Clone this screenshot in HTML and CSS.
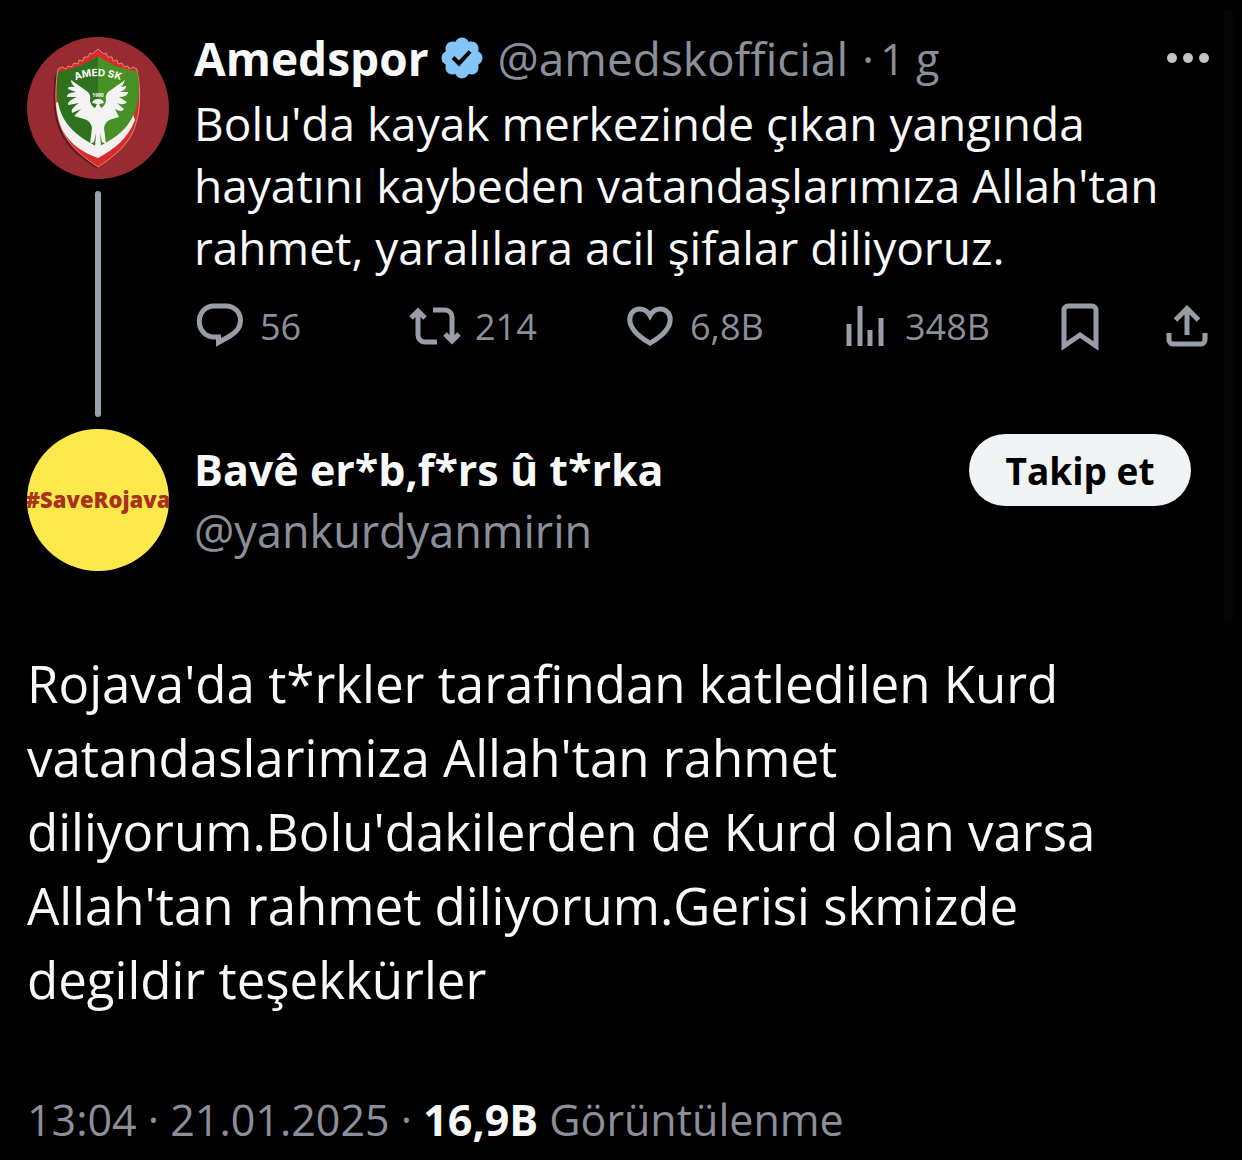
FILE: index.html
```html
<!DOCTYPE html>
<html lang="tr">
<head>
  <meta charset="UTF-8">
  <meta name="viewport" content="width=device-width, initial-scale=1.0">
  <title>Gönderi</title>
  <link rel="stylesheet" href="styles.css">
</head>
<body>
  <main class="thread">

    <!-- Parent post -->
    <article class="post">
      <div class="side">
        <svg class="avatar" viewBox="0 0 142 142" role="img" aria-label="Amedspor">
          <defs>
            <clipPath id="leftHalf"><rect x="0" y="0" width="71" height="142"/></clipPath>
            <path id="crestArc" d="M42 46 Q71 32 100 46"/>
          </defs>
          <circle cx="71" cy="71" r="71" fill="#982b31"/>
          <path d="M28 36 C25 66 27 84 35 99 C43 114 57 123 70 132 L72 120 L40 80 Z" fill="#4a1015" opacity=".7"/>
          <path d="M71 12 L77 17 L79 16 L81 20 L85 20 L86 24 L90 23 L91 27 L95 26 L97 30 L101 29 L102 32 L106 30 L110 32 C115 58 113 80 105 97 C97 112 84 121 71 130 C58 121 45 112 37 97 C28 80 27 58 31 32 L35 30 L39 32 L41 29 L45 30 L47 26 L51 27 L52 23 L56 24 L57 20 L61 20 L63 16 L65 17 Z" fill="#da2a2b" stroke="#e5b58f" stroke-width=".7"/>
          <path d="M29 66 C30 78 32 86 36 94 C44 108 57 116 71 121 C88 112 101 101 108 83 L100 60 H40 Z" fill="#f2f0f0"/>
          <path d="M71 19 C83 27 97 33 110 34 C115 58 110 77 99 90 C91 99 81 105 71 110 C61 105 51 99 43 90 C31 77 28 58 31 35 C45 33 59 27 71 19 Z" fill="#479126"/>
          <path d="M71 19 C83 27 97 33 110 34 C115 58 110 77 99 90 C91 99 81 105 71 110 C61 105 51 99 43 90 C31 77 28 58 31 35 C45 33 59 27 71 19 Z" fill="#2f721e" clip-path="url(#leftHalf)"/>
          <path d="M44 43 L61 55 Q64 58 63 64 Q64 69 68 71 L70 67 L65 66 Q66 62 71 62 Q76 62 77 66 L72 67 L74 71 Q78 69 79 64 Q78 58 81 55 L98 43 Q97 47 94 50 L99 49 Q100 52 93 55 L101 55 Q101 60 92 60 L100 65 Q97 69 90 66 L97 72 Q95 76 88 72 L92 80 L85 82 Q78 84 77 91 L79 107 L75 105 L73 96 L74 110 H68 L69 96 L67 105 L63 107 L65 91 Q64 84 57 82 L47 79 L54 72 L45 76 Q43 72 52 66 L41 68 Q40 64 50 60 L40 60 Q39 56 49 55 L41 52 Q40 49 48 50 Q44 47 44 43 Z" fill="#f3f3f3"/>
          <text class="crest-name"><textPath href="#crestArc" startOffset="50%">AMED SK</textPath></text>
          <text class="crest-year" x="71" y="60">1990</text>
        </svg>
        <div class="connector"></div>
      </div>

      <div class="content">
        <header class="post-head">
          <strong class="name">Amedspor</strong>
          <svg class="verified" viewBox="0 0 24 24" aria-label="Onaylanmış"><path d="M22.25 12c0-1.43-.88-2.67-2.19-3.34.46-1.39.2-2.9-.81-3.91s-2.52-1.27-3.91-.81c-.66-1.31-1.91-2.19-3.34-2.19s-2.67.88-3.33 2.19c-1.4-.46-2.91-.2-3.92.81s-1.26 2.52-.8 3.91c-1.31.67-2.2 1.91-2.2 3.34s.89 2.67 2.2 3.34c-.46 1.39-.21 2.9.8 3.91s2.52 1.26 3.91.81c.67 1.31 1.91 2.19 3.34 2.19s2.68-.88 3.34-2.19c1.39.45 2.9.2 3.91-.81s1.27-2.52.81-3.91c1.31-.67 2.19-1.91 2.19-3.34zm-11.71 4.2L6.8 12.46l1.41-1.42 2.26 2.26 4.8-5.23 1.47 1.36-6.2 6.77z"/></svg>
          <span class="handle">@amedskofficial</span>
          <span class="dot">·</span>
          <span class="age">1 g</span>
          <button class="more" type="button" aria-label="Daha fazla">
            <svg viewBox="0 0 42 12"><circle cx="5" cy="6" r="5"/><circle cx="21" cy="6" r="5"/><circle cx="37" cy="6" r="5"/></svg>
          </button>
        </header>

        <p class="text">Bolu'da kayak merkezinde çıkan yangında hayatını kaybeden vatandaşlarımıza Allah'tan rahmet, yaralılara acil şifalar diliyoruz.</p>

        <div class="actions">
          <button class="action" type="button" aria-label="Yanıtla">
            <svg viewBox="0 0 52 52"><path d="M20 6 H32 C40 6 46.5 12 46.5 20.5 C46.5 28 42 32.5 36 36 L24.5 42.5 V37 H19.5 C11.5 37 5.3 30 5.3 21.5 C5.3 12.5 11.5 6 20 6 Z"/></svg>
            <span>56</span>
          </button>
          <button class="action" type="button" aria-label="Yeniden gönder">
            <svg viewBox="0 0 52 52"><path d="M2 18 L9 11 L16 18 M9 11 V35 A7 7 0 0 0 16 42 H28 M24 10 H36 A7 7 0 0 1 43 17 V41 M36 34 L43 41 L50 34"/></svg>
            <span>214</span>
          </button>
          <button class="action" type="button" aria-label="Beğen">
            <svg viewBox="0 0 52 52"><path d="M26 43.2 C17 38 5.8 29.5 5.8 19.5 C5.8 13 10.5 9 15.5 9 C20 9 23.5 11 26 15.5 C28.5 11 32 9 36.5 9 C41.5 9 46.2 13 46.2 19.5 C46.2 29.5 35 38 26 43.2 Z"/></svg>
            <span>6,8B</span>
          </button>
          <button class="action" type="button" aria-label="Görüntülenme">
            <svg viewBox="0 0 52 52"><path d="M10 24 V46 M21 6 V46 M31 30 V46 M42 18 V46"/></svg>
            <span>348B</span>
          </button>
          <button class="action" type="button" aria-label="Yer işareti">
            <svg viewBox="0 0 52 52"><path d="M10 46 V10 A4 4 0 0 1 14 6 H38 A4 4 0 0 1 42 10 V46 L26 35 Z"/></svg>
          </button>
          <button class="action" type="button" aria-label="Paylaş">
            <svg viewBox="0 0 52 52"><path d="M14.5 20 L26 8.5 L37.5 20 M26 9 V35 M8 33 V40 A4 4 0 0 0 12 44 H40 A4 4 0 0 0 44 40 V33"/></svg>
          </button>
        </div>
      </div>
    </article>

    <!-- Focused reply -->
    <article class="reply">
      <header class="reply-head">
        <svg class="avatar" viewBox="0 0 142 142" role="img" aria-label="#SaveRojava">
          <circle cx="71" cy="71" r="71" fill="#fbe94c"/>
          <text class="save" x="71" y="79">#SaveRojava</text>
        </svg>
        <div class="who">
          <strong class="name">Bavê er*b,f*rs û t*rka</strong>
          <span class="handle">@yankurdyanmirin</span>
        </div>
        <button class="follow" type="button">Takip et</button>
      </header>

      <p class="reply-text">Rojava'da t*rkler tarafindan katledilen Kurd vatandaslarimiza Allah'tan rahmet diliyorum.Bolu'dakilerden de Kurd olan varsa Allah'tan rahmet diliyorum.Gerisi skmizde degildir teşekkürler</p>

      <p class="meta"><time datetime="2025-01-21T13:04">13:04 · 21.01.2025</time> · <strong>16,9B</strong> Görüntülenme</p>
    </article>

  </main>
</body>
</html>
```
FILE: styles.css
```css
* {
  box-sizing: border-box;
}

body {
  margin: 0;
  background: #000;
  color: #f7f9f9;
  font-family: 'Open Sans', 'Noto Sans', sans-serif;
}

p {
  margin: 0;
}

button {
  font-family: inherit;
  border: none;
  padding: 0;
  cursor: pointer;
}

.thread {
  position: relative;
  padding: 28px 29px 8px 27px;
}

/* Faint scroll indicator */
.thread::after {
  content: '';
  position: absolute;
  top: 10px;
  right: 9px;
  width: 9px;
  height: 612px;
  border-radius: 5px;
  background: #050505;
}

.avatar {
  display: block;
  flex: none;
  width: 142px;
  height: 142px;
}

.name {
  font-size: 46px;
  font-weight: 700;
}

.handle,
.dot,
.age {
  color: #8b8f99;
  font-size: 46px;
}

/* Parent post */
.post {
  display: flex;
  gap: 25px;
}

.side {
  display: flex;
  flex-direction: column;
  gap: 12px;
  padding-top: 9px;
}

.connector {
  flex: 1;
  width: 6px;
  margin: 0 auto;
  border-radius: 3px;
  background: #9a9fab;
}

.content {
  flex: 1;
  min-width: 0;
  padding-bottom: 65px;
}

.post-head {
  display: flex;
  align-items: center;
  height: 60px;
  white-space: nowrap;
}

.verified {
  width: 48px;
  height: 48px;
  margin: 0 12px 0 9px;
  fill: #83c5f7;
}

.dot {
  margin: 0 6px 0 14px;
}

.age {
  font-size: 43px;
}

.more {
  margin-left: auto;
  margin-right: 4px;
  background: none;
}

.more svg {
  display: block;
  width: 42px;
  height: 12px;
  fill: #c0c5ce;
}

.text {
  padding-top: 4px;
  font-size: 46px;
  line-height: 62px;
}

.actions {
  display: grid;
  grid-template-columns: repeat(4, 1fr) 107px 52px;
  padding-top: 22px;
}

.action {
  display: flex;
  align-items: center;
  gap: 14px;
  height: 52px;
  background: none;
  color: #8b8f99;
  font-size: 36px;
}

.action svg {
  flex: none;
  width: 52px;
  height: 52px;
  fill: none;
  stroke: #989da8;
  stroke-width: 5;
}

/* Focused reply */
.reply-head {
  display: flex;
  gap: 25px;
  padding-top: 12px;
}

.who {
  display: flex;
  flex: 1;
  flex-direction: column;
  padding-top: 10px;
  line-height: 61px;
}

.who .name {
  font-size: 43px;
}

.who .handle {
  font-size: 45px;
}

.follow {
  width: 222px;
  height: 72px;
  margin: 5px 22px 0 0;
  border-radius: 36px;
  background: #eff3f4;
  color: #000;
  font-size: 37px;
  font-weight: 700;
}

.reply-text {
  padding: 75px 22px 0 0;
  font-size: 51px;
  line-height: 74px;
}

.meta {
  padding-top: 73px;
  color: #8b8f99;
  font-size: 43px;
  line-height: 62px;
}

.meta strong {
  color: #f7f9f9;
}

/* Avatar lettering */
.crest-name {
  fill: #fff;
  font-family: Inter, sans-serif;
  font-size: 10px;
  font-weight: 700;
  text-anchor: middle;
}

.crest-year {
  fill: #fff;
  font-size: 5px;
  font-weight: 700;
  text-anchor: middle;
}

.save {
  fill: #a8321c;
  font-size: 22px;
  font-weight: 800;
  text-anchor: middle;
}
```
